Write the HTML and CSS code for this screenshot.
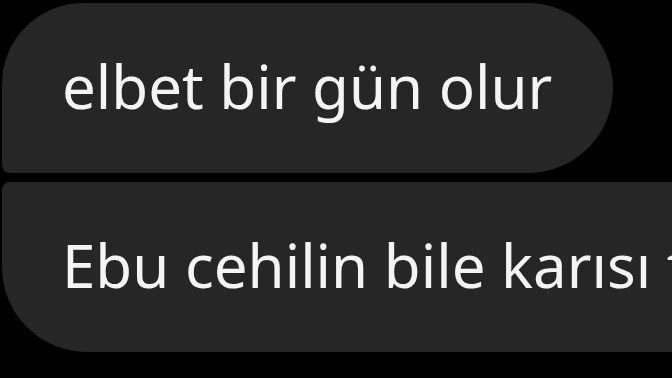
FILE: index.html
```html
<!DOCTYPE html>
<html lang="tr">
<head>
  <meta charset="UTF-8"/>
  <meta name="viewport" content="width=device-width, initial-scale=1"/>
  <title>Mesajlar</title>
  <link rel="stylesheet" href="styles.css">
</head>
<body>

  <div class="chat">
    <!-- first message -->
    <div class="bubble first">
      <span class="text">elbet bir gün olur</span>
    </div>

    <!-- second message, runs off screen -->
    <div class="bubble second">
      <span class="text">Ebu cehilin bile karısı tesettürlüydü</span>
    </div>
  </div>

</body>
</html>
```

FILE: styles.css
```css
* {
  box-sizing: border-box;
}
html, body {
  margin: 0;
  padding: 0;
  background: #000;
  height: 100%;
  overflow: hidden;
  font-family: "Noto Sans", "Open Sans", Arial, sans-serif;
}
.chat {
  display: flex;
  flex-direction: column;
  gap: 9px;
  padding-top: 3px;
  padding-left: 2px;
}
.bubble {
  display: flex;
  align-items: center;
  height: 170px;
  padding: 0 0 4px 60px;
  background: #262626;
  color: #f4f4f4;
  white-space: nowrap;
  overflow: hidden;
}
.bubble .text {
  font-size: 60px;
  line-height: 1;
}
.first {
  width: 611px;
  border-radius: 82px 86px 86px 8px;
}
.second {
  width: 900px;
  border-radius: 8px 86px 86px 86px;
}
```
